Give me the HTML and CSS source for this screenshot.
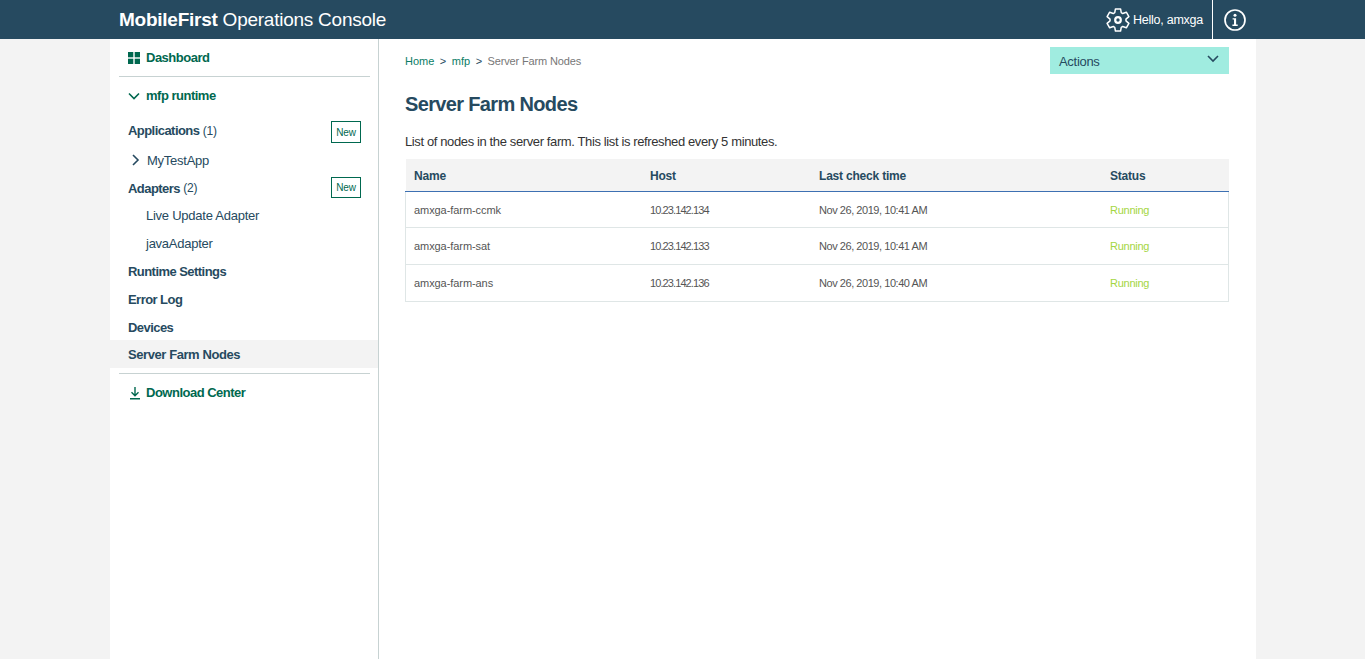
FILE: index.html
```html
<!DOCTYPE html>
<html>
<head>
<meta charset="UTF-8"/>
<title>MobileFirst Operations Console</title>
<link rel="stylesheet" href="styles.css">
</head>
<body>
<header class="topbar">
  <div class="brand"><b>MobileFirst</b> Operations Console</div>
  <div class="user">
    <svg class="gear" width="24" height="24" viewBox="0 0 24 24" fill="none" stroke="#fff" stroke-width="1.5" stroke-linejoin="round">
      <polygon points="8.75,4.69 9.44,.89 14.56,.89 15.25,4.69 16.71,5.53 20.34,4.23 22.9,8.66 19.96,11.16 19.96,12.84 22.9,15.34 20.34,19.77 16.71,18.47 15.25,19.31 14.56,23.11 9.44,23.11 8.75,19.31 7.29,18.47 3.66,19.77 1.1,15.34 4.04,12.84 4.04,11.16 1.1,8.66 3.66,4.23 7.29,5.53"/>
      <circle cx="12" cy="12" r="2.8" stroke-width="2.2"/>
    </svg>
    <span class="hello">Hello, amxga</span>
  </div>
  <div class="info">
    <svg width="22" height="22" viewBox="0 0 22 22" fill="none">
      <circle cx="11" cy="11" r="10" stroke="#fff" stroke-width="1.7"/>
      <circle cx="11" cy="6.2" r="1.5" fill="#fff"/>
      <path d="M8.6 9.2h3.5v6.4h1.6v1.4H8.4v-1.4h1.6v-5H8.6z" fill="#fff"/>
    </svg>
  </div>
</header>
<div class="page">
  <nav class="sidebar">
    <a class="nav-top">
      <svg class="nav-icon" width="12" height="12" viewBox="0 0 12 12" fill="#00684f">
        <rect width="5.3" height="5.3"/><rect x="6.7" width="5.3" height="5.3"/><rect y="6.7" width="5.3" height="5.3"/><rect x="6.7" y="6.7" width="5.3" height="5.3"/>
      </svg>
      Dashboard
    </a>
    <div class="rule"></div>
    <a class="nav-runtime">
      <svg class="nav-icon" width="12" height="12" viewBox="0 0 12 12" fill="none" stroke="#00684f" stroke-width="1.6"><path d="M1 3.5l5 5 5-5"/></svg>
      mfp runtime
    </a>
    <div class="row row-apps"><span class="strong">Applications</span>&nbsp;<span class="count">(1)</span><button class="new new-apps">New</button></div>
    <div class="row row-app">
      <svg class="app-arrow" width="9" height="12" viewBox="0 0 9 12" fill="none" stroke="#264a60" stroke-width="1.6"><path d="M2 1l5 5-5 5"/></svg>
      MyTestApp
    </div>
    <div class="row row-short"><span class="strong">Adapters</span>&nbsp;<span class="count">(2)</span><button class="new">New</button></div>
    <div class="row row-sub">Live Update Adapter</div>
    <div class="row row-sub">javaAdapter</div>
    <div class="row strong">Runtime Settings</div>
    <div class="row strong">Error Log</div>
    <div class="row row-short strong">Devices</div>
    <div class="row strong current">Server Farm Nodes</div>
    <div class="rule rule-low"></div>
    <a class="nav-download">
      <svg class="nav-icon" width="12" height="14" viewBox="0 0 12 14" fill="none" stroke="#00684f" stroke-width="1.4"><path d="M7 1v8.5M3.5 6.2L7 9.7l3.5-3.5M2 12.8h10"/></svg>
      Download Center
    </a>
  </nav>
  <main class="content">
    <div class="content-top">
      <div class="crumbs"><a>Home</a><span class="sep">&gt;</span><a>mfp</a><span class="sep">&gt;</span><span class="crumb-here">Server Farm Nodes</span></div>
      <div class="actions">Actions
        <svg width="12" height="8" viewBox="0 0 12 8" fill="none" stroke="#264a60" stroke-width="1.6"><path d="M1 1l5 5 5-5"/></svg>
      </div>
    </div>
    <h1>Server Farm Nodes</h1>
    <p class="intro">List of nodes in the server farm. This list is refreshed every 5 minutes.</p>
    <table>
      <thead>
        <tr><th class="c1">Name</th><th class="c2">Host</th><th class="c3">Last check time</th><th>Status</th></tr>
      </thead>
      <tbody>
        <tr class="first"><td>amxga-farm-ccmk</td><td class="host">10.23.142.134</td><td class="time">Nov 26, 2019, 10:41 AM</td><td class="running">Running</td></tr>
        <tr><td>amxga-farm-sat</td><td class="host">10.23.142.133</td><td class="time">Nov 26, 2019, 10:41 AM</td><td class="running">Running</td></tr>
        <tr><td>amxga-farm-ans</td><td class="host">10.23.142.136</td><td class="time">Nov 26, 2019, 10:40 AM</td><td class="running">Running</td></tr>
      </tbody>
    </table>
  </main>
</div>
</body>
</html>
```

FILE: styles.css
```css
html, body {
    height: 100%;
}
body {
    margin: 0;
    background: #f3f3f3;
    font-family: "Liberation Sans", Arial, sans-serif;
    font-size: 13px;
    color: #264a60;
    overflow: hidden;
}
.topbar {
    display: flex;
    align-items: center;
    height: 39px;
    padding: 0 119px;
    background: #264a60;
    color: #fff;
}
.brand {
    flex: 1;
    font-size: 19px;
    letter-spacing: -0.25px;
}
.user {
    display: flex;
    align-items: center;
    gap: 3px;
    height: 39px;
    padding-right: 9px;
    border-right: 1px solid #fff;
}
.hello {
    font-size: 12.5px;
    letter-spacing: -0.25px;
}
.info {
    display: flex;
    align-items: center;
    padding-left: 11px;
}
.page {
    display: flex;
    width: 1146px;
    height: 620px;
    margin-left: 110px;
    background: #fff;
}
.sidebar {
    width: 268px;
    border-right: 1px solid #c7d2d2;
    font-size: 13px;
    letter-spacing: -0.25px;
}
.nav-top, .nav-runtime, .nav-download {
    display: flex;
    align-items: center;
    gap: 6px;
    padding-left: 18px;
    color: #00684f;
    font-weight: bold;
    letter-spacing: -0.5px;
}
.nav-top {
    height: 37px;
}
.rule {
    height: 1px;
    margin: 0 8px 0 9px;
    background: #c7d2d2;
}
.rule-low {
    margin-top: 5px;
}
.nav-runtime {
    height: 37px;
}
.row {
    position: relative;
    display: flex;
    align-items: center;
    height: 28px;
    padding-left: 18px;
}
.row-short {
    height: 27px;
    padding-top: 1px;
    box-sizing: border-box;
}
.row-apps {
    height: 31px;
    margin-top: 1px;
}
.row-app {
    gap: 7px;
    padding-left: 21px;
}
.row-sub {
    padding-left: 36px;
}
.strong {
    font-weight: bold;
    letter-spacing: -0.55px;
}
.count {
    font-size: 12px;
}
.current {
    background: #f3f3f3;
    letter-spacing: -0.42px;
}
.new {
    position: absolute;
    top: 3px;
    right: 17px;
    width: 30px;
    height: 21px;
    padding: 0;
    border: 1px solid #00684f;
    background: #fff;
    color: #00684f;
    font-family: inherit;
    font-size: 10px;
    letter-spacing: -0.1px;
}
.new-apps {
    top: 6px;
    height: 22px;
}
.nav-download {
    height: 37px;
}
.content {
    flex: 1;
    padding: 0 27px 0 26px;
}
.content-top {
    display: flex;
    justify-content: space-between;
    align-items: flex-start;
    padding-top: 8px;
}
.crumbs {
    padding-top: 8px;
    font-size: 11px;
    color: #0b7d66;
}
.sep {
    margin: 0 5.5px;
    color: #264a60;
}
.crumb-here {
    color: #777;
    letter-spacing: -0.15px;
}
.actions {
    display: flex;
    justify-content: space-between;
    align-items: center;
    width: 179px;
    height: 27px;
    padding: 2px 10px 0 9px;
    box-sizing: border-box;
    background: #a0ece0;
    font-size: 13px;
    letter-spacing: -0.3px;
}
.actions svg {
    margin-bottom: 6px;
}
h1 {
    margin: 18px 0 0;
    font-size: 20px;
    line-height: 24px;
    letter-spacing: -0.65px;
}
.intro {
    margin: 18px 0 0;
    font-size: 13px;
    line-height: 16px;
    color: #333;
    letter-spacing: -0.38px;
}
table {
    width: 824px;
    margin-top: 9px;
    border-collapse: collapse;
    table-layout: fixed;
    font-size: 11px;
}
th {
    height: 32px;
    padding: 2px 9px 0 8.5px;
    box-sizing: border-box;
    background: #f3f3f3;
    border-bottom: 1px solid #3d70b2;
    text-align: left;
    font-size: 12px;
    letter-spacing: -0.2px;
}
.c1 {
    width: 236px;
}
.c2 {
    width: 169px;
}
.c3 {
    width: 291px;
}
td {
    height: 36px;
    padding: 0 9px 0 8.5px;
    border-bottom: 1px solid #dfe6e6;
    color: #555;
    letter-spacing: -0.07px;
}
.first td {
    height: 34px;
    padding-top: 1px;
}
tbody tr td:first-child {
    border-left: 1px solid #dfe6e6;
    padding-left: 8px;
}
tbody tr td:last-child {
    border-right: 1px solid #dfe6e6;
}
td.host {
    letter-spacing: -0.9px;
}
td.time {
    letter-spacing: -0.45px;
}
td.running {
    color: #a4d642;
    letter-spacing: -0.25px;
}
```
